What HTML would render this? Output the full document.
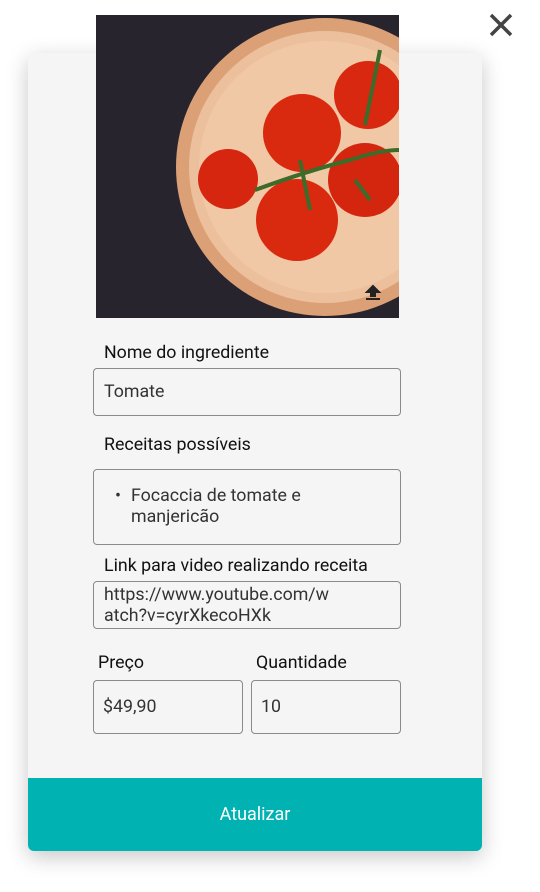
<!DOCTYPE html>
<html><head><style>
body{margin:0;width:540px;height:892px;background:#fff;font-family:"Roboto","Liberation Sans",sans-serif;position:relative;overflow:hidden}
.card{position:absolute;left:28px;top:53px;width:454px;height:798px;background:#f5f5f5;border-radius:6px;box-shadow:0 6px 22px rgba(0,0,0,.22)}
.btn{position:absolute;left:28px;top:778px;width:454px;height:73px;background:#00b2b2;border-radius:0 0 6px 6px;color:#fff;font-size:18px;text-align:center;line-height:73px}
.lbl{position:absolute;font-size:17.8px;color:#111}
.box{position:absolute;border:1px solid #8a8a8a;border-radius:4px;box-sizing:border-box;font-size:17.8px;color:#333}
</style></head><body>
<div class="card"></div>
<svg style="position:absolute;left:96px;top:15px" width="303" height="303" viewBox="96 15 303 303">
<rect x="96" y="15" width="303" height="303" fill="#27242d"/>
<circle cx="325" cy="167" r="149" fill="#dca077"/>
<circle cx="325" cy="167" r="136" fill="#ecc09c"/>
<circle cx="325" cy="167" r="126" fill="#f1c8a5"/>
<circle cx="228" cy="179" r="30" fill="#d6260f"/>
<circle cx="302" cy="133" r="39" fill="#d9290f"/>
<circle cx="368" cy="95" r="34" fill="#d8280f"/>
<circle cx="365" cy="180" r="37" fill="#d4250e"/>
<circle cx="297" cy="220" r="41" fill="#d9290f"/>
<path d="M255 190 Q310 170 350 160 Q380 150 399 150 M300 160 L310 210 M365 125 L380 50 M355 180 L370 200" stroke="#3d6b2a" stroke-width="4" fill="none"/>
<path d="M373 286 l-6 6 h4 v4 h4 v-4 h4z M366 299 h14" stroke="#222" stroke-width="2" fill="#222"/>
</svg>
<svg style="position:absolute;left:489px;top:13px" width="24" height="24" viewBox="0 0 24 24"><path d="M2 2L22 22M22 2L2 22" stroke="#444" stroke-width="3.5"/></svg>
<div class="lbl" style="left:104px;top:342px">Nome do ingrediente</div>
<div class="box" style="left:93px;top:368px;width:308px;height:48px;padding:12px 10px">Tomate</div>
<div class="lbl" style="left:104px;top:434px">Receitas possíveis</div>
<div class="box" style="left:93px;top:469px;width:308px;height:76px;padding:15px 0 0 37px;line-height:21px">Focaccia de tomate e<br>manjericão<span style="position:absolute;left:21px;top:15px">•</span></div>
<div class="lbl" style="left:104px;top:555px">Link para video realizando receita</div>
<div class="box" style="left:93px;top:581px;width:308px;height:48px;padding:2px 10px;line-height:21px">https://www.youtube.com/w<br>atch?v=cyrXkecoHXk</div>
<div class="lbl" style="left:98px;top:652px">Preço</div>
<div class="lbl" style="left:256px;top:652px">Quantidade</div>
<div class="box" style="left:93px;top:680px;width:150px;height:54px;padding:15px 9px">$49,90</div>
<div class="box" style="left:251px;top:680px;width:150px;height:54px;padding:15px 9px">10</div>
<div class="btn">Atualizar</div>
</body></html>
